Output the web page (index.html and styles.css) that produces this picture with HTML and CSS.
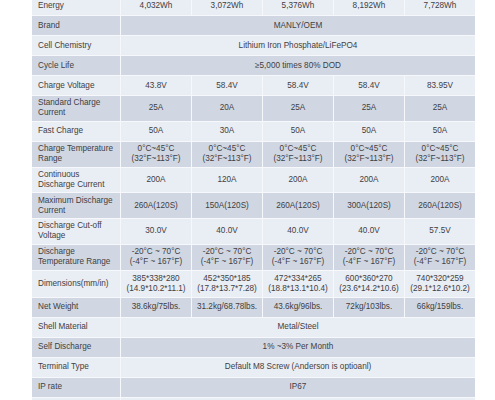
FILE: index.html
```html
<!DOCTYPE html>
<html>
<head>
<meta charset="utf-8">
<link rel="stylesheet" href="styles.css">
</head>
<body>
<div class="sheet">
  <div class="c lab l">Energy</div><div class="c l">4,032Wh</div><div class="c l">3,072Wh</div><div class="c l">5,376Wh</div><div class="c l">8,192Wh</div><div class="c l">7,728Wh</div>
  <div class="c lab d">Brand</div><div class="c d span">MANLY/OEM</div>
  <div class="c lab l">Cell Chemistry</div><div class="c l span">Lithium Iron Phosphate/LiFePO4</div>
  <div class="c lab d">Cycle Life</div><div class="c d span">≥5,000 times 80% DOD</div>
  <div class="c lab l">Charge Voltage</div><div class="c l">43.8V</div><div class="c l">58.4V</div><div class="c l">58.4V</div><div class="c l">58.4V</div><div class="c l">83.95V</div>
  <div class="c lab d">Standard Charge<br>Current</div><div class="c d">25A</div><div class="c d">20A</div><div class="c d">25A</div><div class="c d">25A</div><div class="c d">25A</div>
  <div class="c lab l">Fast Charge</div><div class="c l">50A</div><div class="c l">30A</div><div class="c l">50A</div><div class="c l">50A</div><div class="c l">50A</div>
  <div class="c lab d">Charge Temperature<br>Range</div><div class="c d">0°C~45°C<br>(32°F~113°F)</div><div class="c d">0°C~45°C<br>(32°F~113°F)</div><div class="c d">0°C~45°C<br>(32°F~113°F)</div><div class="c d">0°C~45°C<br>(32°F~113°F)</div><div class="c d">0°C~45°C<br>(32°F~113°F)</div>
  <div class="c lab l">Continuous<br>Discharge Current</div><div class="c l">200A</div><div class="c l">120A</div><div class="c l">200A</div><div class="c l">200A</div><div class="c l">200A</div>
  <div class="c lab d">Maximum Discharge<br>Current</div><div class="c d">260A(120S)</div><div class="c d">150A(120S)</div><div class="c d">260A(120S)</div><div class="c d">300A(120S)</div><div class="c d">260A(120S)</div>
  <div class="c lab l">Discharge Cut-off<br>Voltage</div><div class="c l">30.0V</div><div class="c l">40.0V</div><div class="c l">40.0V</div><div class="c l">40.0V</div><div class="c l">57.5V</div>
  <div class="c lab d">Discharge<br>Temperature Range</div><div class="c d">-20°C ~ 70°C<br>(-4°F ~ 167°F)</div><div class="c d">-20°C ~ 70°C<br>(-4°F ~ 167°F)</div><div class="c d">-20°C ~ 70°C<br>(-4°F ~ 167°F)</div><div class="c d">-20°C ~ 70°C<br>(-4°F ~ 167°F)</div><div class="c d">-20°C ~ 70°C<br>(-4°F ~ 167°F)</div>
  <div class="c lab l">Dimensions(mm/in)</div><div class="c l">385*338*280<br>(14.9*10.2*11.1)</div><div class="c l">452*350*185<br>(17.8*13.7*7.28)</div><div class="c l">472*334*265<br>(18.8*13.1*10.4)</div><div class="c l">600*360*270<br>(23.6*14.2*10.6)</div><div class="c l">740*320*259<br>(29.1*12.6*10.2)</div>
  <div class="c lab d">Net Weight</div><div class="c d">38.6kg/75lbs.</div><div class="c d">31.2kg/68.78lbs.</div><div class="c d">43.6kg/96lbs.</div><div class="c d">72kg/103lbs.</div><div class="c d">66kg/159lbs.</div>
  <div class="c lab l">Shell Material</div><div class="c l span">Metal/Steel</div>
  <div class="c lab d">Self Discharge</div><div class="c d span">1% ~3% Per Month</div>
  <div class="c lab l">Terminal Type</div><div class="c l span">Default M8 Screw (Anderson is optioanl)</div>
  <div class="c lab d">IP rate</div><div class="c d span">IP67</div>
  <div class="c lab l"></div><div class="c l span"></div>
</div>
</body>
</html>
```
FILE: styles.css
```css
html, body {
  margin: 0;
  padding: 0;
  background: #ffffff;
  overflow: hidden;
}

body {
  font-family: "Liberation Sans", Arial, sans-serif;
  font-size: 8.2px;
  color: #3f4042;
}

.sheet {
  display: grid;
  grid-template-columns: 88px repeat(5, 70px);
  grid-template-rows: 19px 19px 19px 19px 19px 24.75px 19px 24.75px 24.75px 24.75px 24.75px 24.75px 26.2px 19px 19px 19px 19px 19px 19px;
  gap: 1px;
  margin: -4px 0 0 32px;
  width: 443px;
  background: #f6f8fb;
}

.c {
  display: flex;
  align-items: center;
  justify-content: center;
  text-align: center;
  line-height: 10px;
  white-space: nowrap;
}

.lab {
  justify-content: flex-start;
  text-align: left;
  padding-left: 6px;
}

.span {
  grid-column: span 5;
}

.l {
  background: #e9edf4;
}

.d {
  background: #d0d7e3;
}
```
